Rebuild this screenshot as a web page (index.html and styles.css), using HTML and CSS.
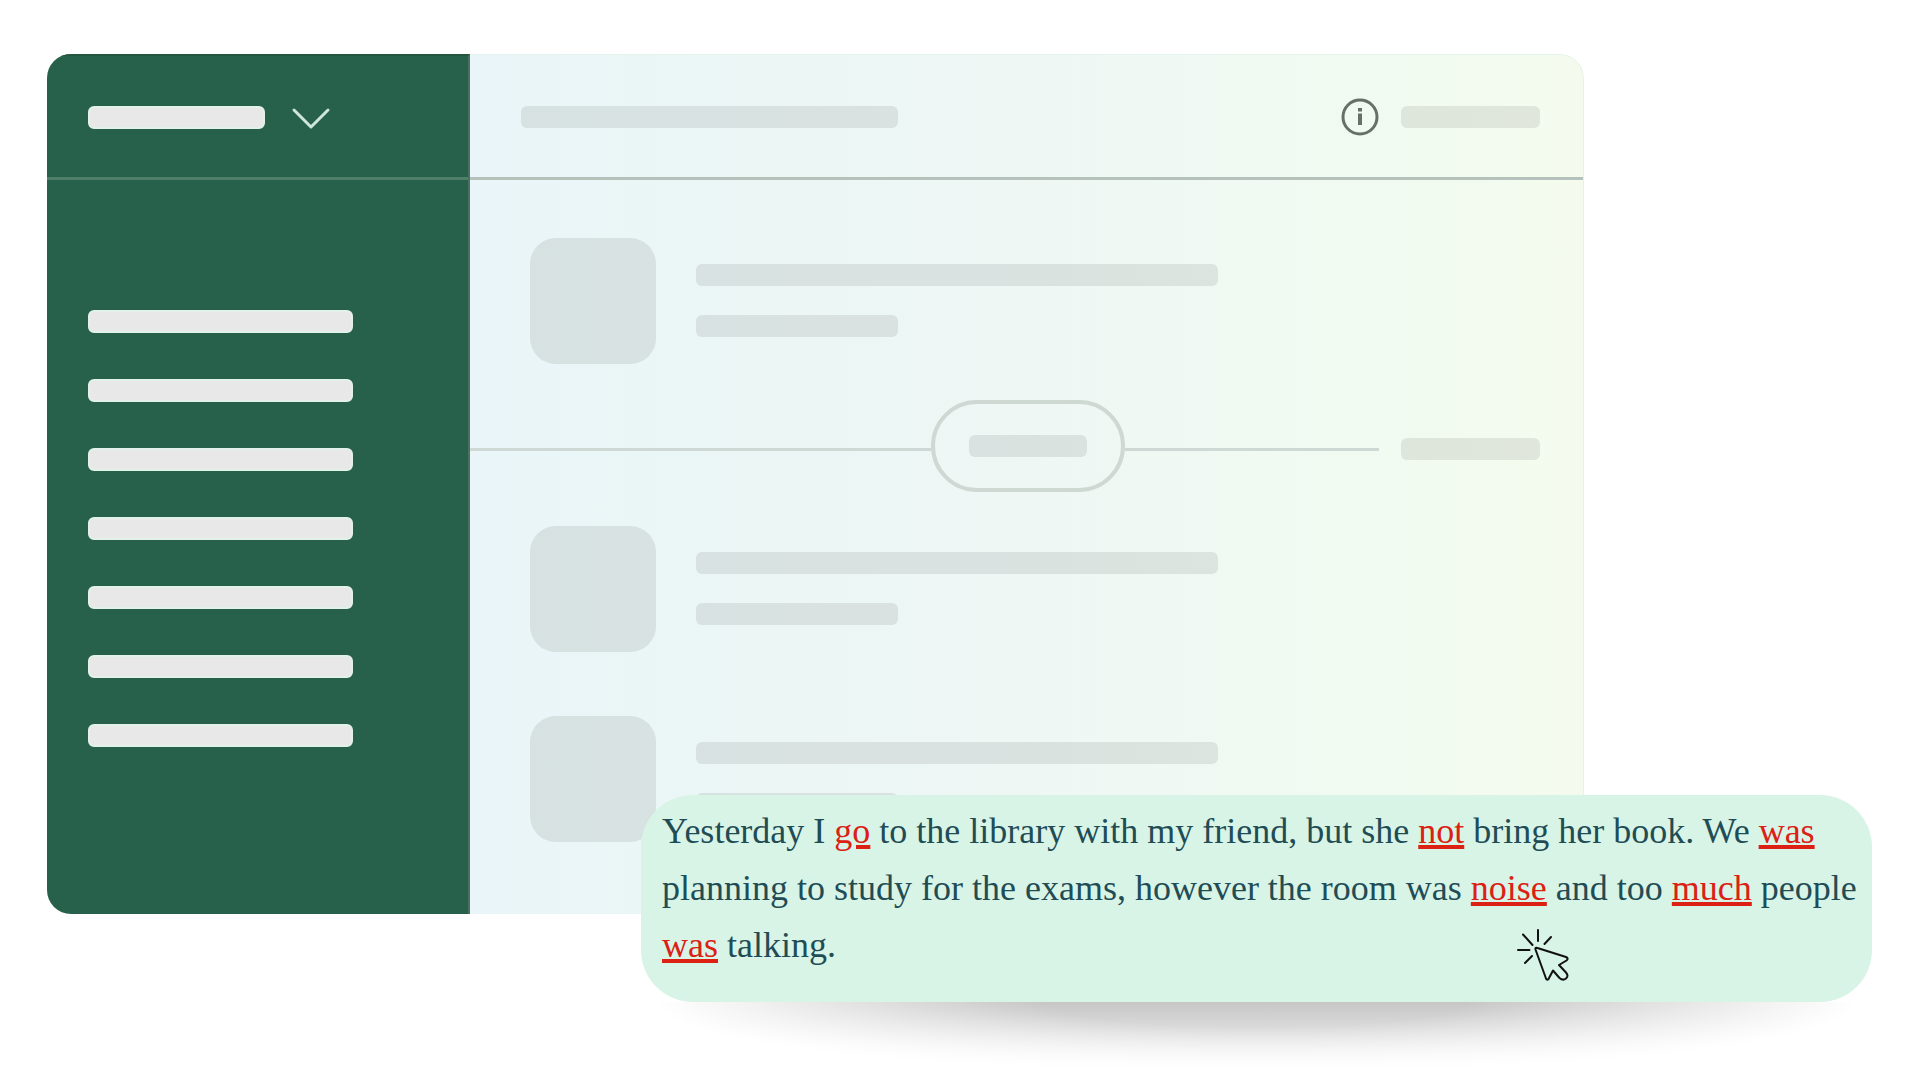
FILE: index.html
```
<!DOCTYPE html>
<html lang="en">
<head>
  <meta charset="UTF-8">
  <meta name="viewport" content="width=device-width, initial-scale=1.0">
  <title>Writing check</title>
  <link rel="stylesheet" href="styles.css">
</head>
<body>

<div class="stage">
  <div class="app">
    <aside class="sidebar">
      <div class="sidebar-header">
        <span class="bar light bar-title"></span>
        <button class="icon-button" aria-label="Open menu">
          <svg width="40" height="24" viewBox="0 0 40 24" fill="none" stroke="#cfe6da" stroke-width="3" stroke-linecap="round" stroke-linejoin="round">
            <path d="M3 4L20 21L37 4"/>
          </svg>
        </button>
      </div>
      <ul class="nav">
        <li class="bar light"></li>
        <li class="bar light"></li>
        <li class="bar light"></li>
        <li class="bar light"></li>
        <li class="bar light"></li>
        <li class="bar light"></li>
        <li class="bar light"></li>
      </ul>
    </aside>

    <main class="main">
      <header class="main-header">
        <span class="bar bar-heading"></span>
        <button class="icon-button info" aria-label="Info">
          <svg width="38" height="38" viewBox="0 0 38 38" fill="none" stroke="#667069" stroke-width="3">
            <circle cx="19" cy="19" r="17"/>
            <path d="M19 15.500V27" stroke-width="4"/>
            <path d="M19 10V13.500" stroke-width="4"/>
          </svg>
        </button>
        <span class="bar bar-tag"></span>
      </header>

      <div class="feed">
        <div class="row">
          <div class="thumb"></div>
          <div class="lines">
            <span class="bar bar-long"></span>
            <span class="bar bar-short"></span>
          </div>
        </div>

        <div class="divider">
          <span class="rule rule-left"></span>
          <span class="pill"><span class="bar bar-pill"></span></span>
          <span class="rule rule-right"></span>
          <span class="bar bar-tag"></span>
        </div>

        <div class="row">
          <div class="thumb"></div>
          <div class="lines">
            <span class="bar bar-long"></span>
            <span class="bar bar-short"></span>
          </div>
        </div>

        <div class="row">
          <div class="thumb"></div>
          <div class="lines">
            <span class="bar bar-long"></span>
            <span class="bar bar-short"></span>
          </div>
        </div>
      </div>
    </main>
  </div>

  <div class="note">
    <p class="note-text">Yesterday I <u>go</u> to the library with my friend, but she <u>not</u> bring her book. We <u>was</u> planning to study for the exams, however the room was <u>noise</u> and too <u>much</u> people <u>was</u> talking.</p>
    <svg class="cursor" width="54" height="54" viewBox="0 0 54 54" fill="none" stroke="#111" stroke-width="2" stroke-linecap="round" stroke-linejoin="round">
      <path d="M22 2V13M7 6.500L16.500 17M35 9L28.500 16M2 22H13.500M9 35L16 28"/>
      <path d="M19.500 21.500Q19 19 21.500 20L50 29Q53 30.500 50.500 32.500L43 37L50 44.500Q53 48 50 50.500Q47 53 43.500 50L37 42.500L32.500 51Q31 52.500 30 50.500Z"/>
    </svg>
  </div>
</div>

</body>
</html>
```
FILE: styles.css
```
* {
  box-sizing: border-box;
  margin: 0;
  padding: 0;
}

body {
  background: #fff;
  font-family: "Liberation Serif", "Times New Roman", serif;
}

.stage {
  position: relative;
  min-height: 100vh;
  padding: 54px 48px 0 47px;
  overflow: hidden;
}

.app {
  display: flex;
  width: calc(100% - 288px);
  border-radius: 24px 24px 0 24px;
  overflow: hidden;
}

.sidebar {
  width: 423px;
  flex-shrink: 0;
  background: #28614b;
  border-top: 2px solid #24553f;
  border-right: 2px solid #4d6f60;
}

.sidebar-header {
  display: flex;
  align-items: center;
  gap: 26px;
  height: 124px;
  padding: 2px 41px 0;
  border-bottom: 3px solid #4d7f69;
}

.bar {
  display: block;
  height: 22px;
  border-radius: 6px;
  background: rgba(50, 50, 45, 0.1);
}

.bar.light {
  height: 23px;
  background: #e8e8e8;
  border: 2px solid #e2f1e9;
}

.bar-title {
  width: 177px;
}

.icon-button {
  display: flex;
  background: none;
  border: none;
  cursor: pointer;
}

.nav {
  display: flex;
  flex-direction: column;
  gap: 46px;
  padding: 130px 115px 167px 41px;
  list-style: none;
}

.main {
  flex: 1;
  background: linear-gradient(to right, #e9f5f8, #ebf6f5 25%, #eef7f4 50%, #f0faf2 72%, #f4fbee);
  border-top: 1px solid #e4f3ec;
  border-right: 1px solid #e4f3e6;
  border-top-right-radius: 24px;
}

.main-header {
  display: flex;
  align-items: center;
  height: 125px;
  padding: 2px 43px 0 51px;
  border-bottom: 3px solid #b5c1bb;
}

.bar-heading {
  width: 377px;
}

.info {
  margin-left: auto;
  margin-right: 22px;
}

.bar-tag {
  width: 139px;
}

.feed {
  padding: 58px 0 72px;
}

.row {
  display: flex;
  gap: 40px;
  padding-left: 60px;
}

.row + .row {
  margin-top: 64px;
}

.thumb {
  width: 126px;
  height: 126px;
  border-radius: 26px;
  background: rgba(50, 50, 45, 0.1);
}

.lines {
  display: flex;
  flex-direction: column;
  gap: 29px;
  padding-top: 26px;
}

.bar-long {
  width: 522px;
}

.bar-short {
  width: 202px;
}

.divider {
  display: flex;
  align-items: center;
  height: 98px;
  margin: 36px 0 28px;
  padding-right: 43px;
}

.rule {
  height: 3px;
  background: #ced9d5;
}

.rule-left {
  flex: 462;
}

.rule-right {
  flex: 254;
  margin-right: 22px;
}

.pill {
  display: flex;
  align-items: center;
  align-self: flex-start;
  justify-content: center;
  width: 194px;
  height: 92px;
  border: 4px solid #ced9d4;
  border-radius: 46px;
}

.bar-pill {
  width: 118px;
}

.note {
  position: absolute;
  top: 795px;
  right: 48px;
  width: 1231px;
  max-width: 90vw;
  height: 207px;
  padding: 8px 8px 0 21px;
  border-radius: 52px;
  background: #d8f4e6;
}

/* soft shadow that sinks below the card */
.note::after {
  content: "";
  position: absolute;
  left: 16px;
  right: 16px;
  top: 100%;
  height: 72px;
  background: linear-gradient(#c6c6c6, #fff);
  -webkit-mask-image: radial-gradient(ellipse 50% 100% at 50% 0, #000 35%, transparent);
  mask-image: radial-gradient(ellipse 50% 100% at 50% 0, #000 35%, transparent);
}

.note-text {
  font-size: 36px;
  line-height: 57px;
  color: #1f4c55;
}

.note-text u {
  color: #dc2013;
  text-decoration-thickness: 4px;
}

.cursor {
  position: absolute;
  right: 302px;
  bottom: 20px;
}
```
